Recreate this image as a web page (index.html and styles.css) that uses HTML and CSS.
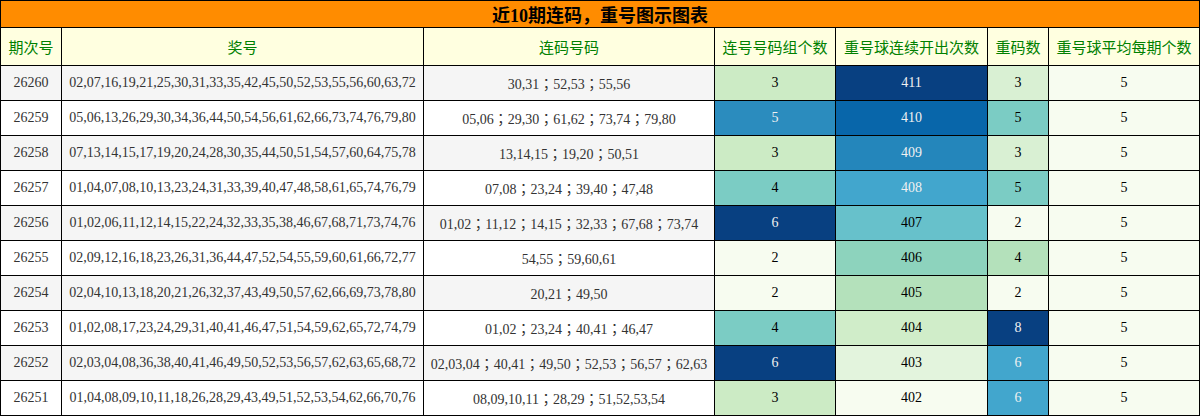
FILE: index.html
```html
<!DOCTYPE html>
<html lang="zh">
<head>
<meta charset="utf-8">
<title>近10期连码，重号图示图表</title>
<link rel="stylesheet" href="styles.css">
</head>
<body>
<table class="chart">
  <colgroup>
    <col class="c1"><col class="c2"><col class="c3"><col class="c4"><col class="c5"><col class="c6"><col class="c7">
  </colgroup>
  <thead>
    <tr class="title-row"><th colspan="7" class="title">近10期连码，重号图示图表</th></tr>
    <tr class="head-row">
      <th>期次号</th><th>奖号</th><th>连码号码</th><th>连号号码组个数</th><th>重号球连续开出次数</th><th>重码数</th><th>重号球平均每期个数</th>
    </tr>
  </thead>
  <tbody>
    <tr class="alt">
      <td>26260</td><td>02,07,16,19,21,25,30,31,33,35,42,45,50,52,53,55,56,60,63,72</td><td class="codes">30,31；52,53；55,56</td>
      <td class="g3">3</td><td class="s411 lt">411</td><td class="r3">3</td><td class="g0">5</td>
    </tr>
    <tr>
      <td>26259</td><td>05,06,13,26,29,30,34,36,44,50,54,56,61,62,66,73,74,76,79,80</td><td class="codes">05,06；29,30；61,62；73,74；79,80</td>
      <td class="g5 lt">5</td><td class="s410 lt">410</td><td class="g4">5</td><td class="g0">5</td>
    </tr>
    <tr class="alt">
      <td>26258</td><td>07,13,14,15,17,19,20,24,28,30,35,44,50,51,54,57,60,64,75,78</td><td class="codes">13,14,15；19,20；50,51</td>
      <td class="g3">3</td><td class="s409 lt">409</td><td class="r3">3</td><td class="g0">5</td>
    </tr>
    <tr>
      <td>26257</td><td>01,04,07,08,10,13,23,24,31,33,39,40,47,48,58,61,65,74,76,79</td><td class="codes">07,08；23,24；39,40；47,48</td>
      <td class="g4">4</td><td class="s408 lt">408</td><td class="g4">5</td><td class="g0">5</td>
    </tr>
    <tr class="alt">
      <td>26256</td><td>01,02,06,11,12,14,15,22,24,32,33,35,38,46,67,68,71,73,74,76</td><td class="codes">01,02；11,12；14,15；32,33；67,68；73,74</td>
      <td class="g6 lt">6</td><td class="s407">407</td><td class="g0">2</td><td class="g0">5</td>
    </tr>
    <tr>
      <td>26255</td><td>02,09,12,16,18,23,26,31,36,44,47,52,54,55,59,60,61,66,72,77</td><td class="codes">54,55；59,60,61</td>
      <td class="g0">2</td><td class="s406">406</td><td class="s405">4</td><td class="g0">5</td>
    </tr>
    <tr class="alt">
      <td>26254</td><td>02,04,10,13,18,20,21,26,32,37,43,49,50,57,62,66,69,73,78,80</td><td class="codes">20,21；49,50</td>
      <td class="g0">2</td><td class="s405">405</td><td class="g0">2</td><td class="g0">5</td>
    </tr>
    <tr>
      <td>26253</td><td>01,02,08,17,23,24,29,31,40,41,46,47,51,54,59,62,65,72,74,79</td><td class="codes">01,02；23,24；40,41；46,47</td>
      <td class="g4">4</td><td class="s404">404</td><td class="g6 lt">8</td><td class="g0">5</td>
    </tr>
    <tr class="alt">
      <td>26252</td><td>02,03,04,08,36,38,40,41,46,49,50,52,53,56,57,62,63,65,68,72</td><td class="codes">02,03,04；40,41；49,50；52,53；56,57；62,63</td>
      <td class="g6 lt">6</td><td class="s403">403</td><td class="s408 lt">6</td><td class="g0">5</td>
    </tr>
    <tr>
      <td>26251</td><td>01,04,08,09,10,11,18,26,28,29,43,49,51,52,53,54,62,66,70,76</td><td class="codes">08,09,10,11；28,29；51,52,53,54</td>
      <td class="g3">3</td><td class="s402">402</td><td class="s408 lt">6</td><td class="g0">5</td>
    </tr>
  </tbody>
</table>
</body>
</html>
```

FILE: styles.css
```css
html, body {
  margin: 0;
  padding: 0;
  background: #ffffff;
}

.chart {
  border-collapse: collapse;
  table-layout: fixed;
  width: 1199px;
  font-family: "Liberation Serif", "Noto Sans CJK SC", serif;
  font-size: 14px;
  color: #333333;
}

.c1 { width: 61px; }
.c2 { width: 362px; }
.c3 { width: 291px; }
.c4 { width: 121px; }
.c5 { width: 152px; }
.c6 { width: 61px; }
.c7 { width: 151px; }

.chart th,
.chart td {
  border: 1px solid #000000;
  padding: 0;
  text-align: center;
  vertical-align: middle;
  white-space: nowrap;
  overflow: hidden;
}

.title {
  background: #ff8c00;
  color: #000000;
  font-size: 18px;
  font-weight: bold;
  height: 26px;
}

.head-row th {
  background: #ffffe0;
  color: #008000;
  font-size: 15px;
  font-weight: normal;
  height: 37px;
}

.chart td {
  height: 34px;
  background: #ffffff;
}

.chart td.codes {
  font-family: "Liberation Serif", "Noto Sans CJK JP", serif;
}

.chart tr.alt td {
  background: #f5f5f5;
}

.chart tr td.g0 { background: #f7fcf0; color: #000000; }
.chart tr td.g3 { background: #ccebc5; color: #000000; }
.chart tr td.r3 { background: #d9f0d3; color: #000000; }
.chart tr td.g4 { background: #7bccc4; color: #000000; }
.chart tr td.g5 { background: #2b8cbe; }
.chart tr td.g6 { background: #084081; }

.chart tr td.s411 { background: #084081; }
.chart tr td.s410 { background: #0866aa; }
.chart tr td.s409 { background: #2486bb; }
.chart tr td.s408 { background: #42a6cd; }
.chart tr td.s407 { background: #67c1cb; color: #000000; }
.chart tr td.s406 { background: #8dd3bd; color: #000000; }
.chart tr td.s405 { background: #b4e1bb; color: #000000; }
.chart tr td.s404 { background: #d0edc9; color: #000000; }
.chart tr td.s403 { background: #e3f4dd; color: #000000; }
.chart tr td.s402 { background: #f7fcf0; color: #000000; }

.chart tr td.lt { color: #f1f1f1; }
```
